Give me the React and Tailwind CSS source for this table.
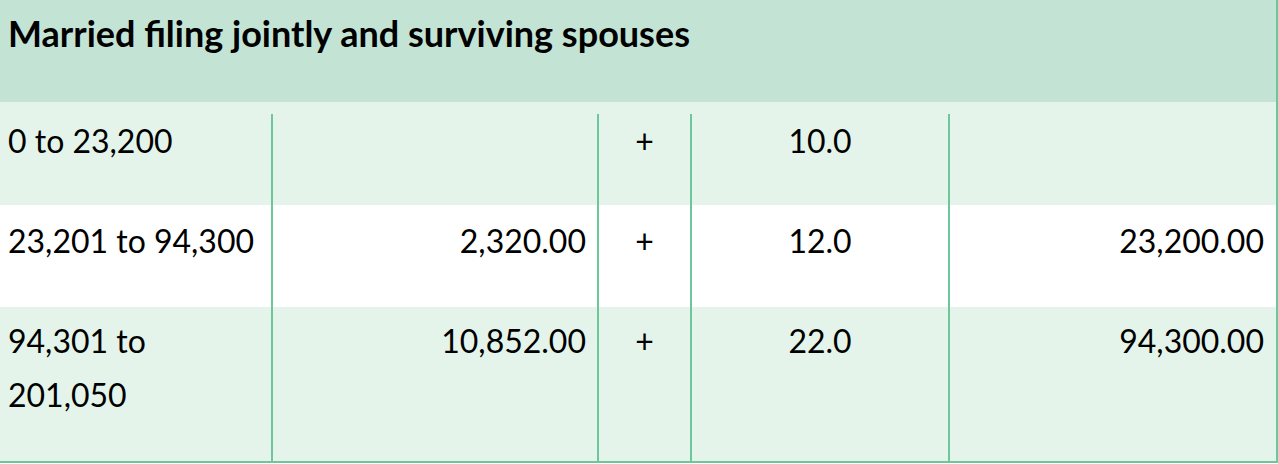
const rows = [
  { range: "0 to 23,200", base: "", rate: "10.0", over: "" },
  { range: "23,201 to 94,300", base: "2,320.00", rate: "12.0", over: "23,200.00" },
  { range: "94,301 to 201,050", base: "10,852.00", rate: "22.0", over: "94,300.00" },
];

function Cells({ row, pad }) {
  const cell = "border-l-2 border-[#6cc79a]";
  return (
    <>
      <div className={`${pad} pl-2 pr-2`}>{row.range}</div>
      <div className={`${cell} ${pad} pr-[11px] text-right`}>{row.base}</div>
      <div className={`${cell} ${pad} text-center`}>+</div>
      <div className={`${cell} ${pad} text-center`}>{row.rate}</div>
      <div className={`${cell} ${pad} pr-[12px] text-right`}>{row.over}</div>
    </>
  );
}

export default function App() {
  const grid = "grid grid-cols-[271px_326px_93px_258px_328px] text-[32px] leading-[54px]";
  return (
    <div className="w-[1278px] bg-white text-black font-['Lato',sans-serif]">
      <div className="border-r-2 border-b-2 border-[#6cc79a] w-[1278px]">
        {/* header */}
        <div className="h-[102px] bg-[#c3e4d5] px-2 pt-[13px]">
          <h2 className="text-[36px] leading-[40px] font-bold">
            Married filing jointly and surviving spouses
          </h2>
        </div>

        {/* row 1 */}
        <div className="bg-[#e4f4ea] pt-[12px]">
          <div className={`${grid} h-[91px] leading-[38px]`}>
            <Cells row={rows[0]} pad="pt-0" />
          </div>
        </div>

        {/* row 2 */}
        <div className={`${grid} h-[102px] bg-white`}>
          <Cells row={rows[1]} pad="pt-[9px]" />
        </div>

        {/* row 3 */}
        <div className={`${grid} h-[154px] bg-[#e4f4ea]`}>
          <Cells row={rows[2]} pad="pt-[7px]" />
        </div>
      </div>
    </div>
  );
}
